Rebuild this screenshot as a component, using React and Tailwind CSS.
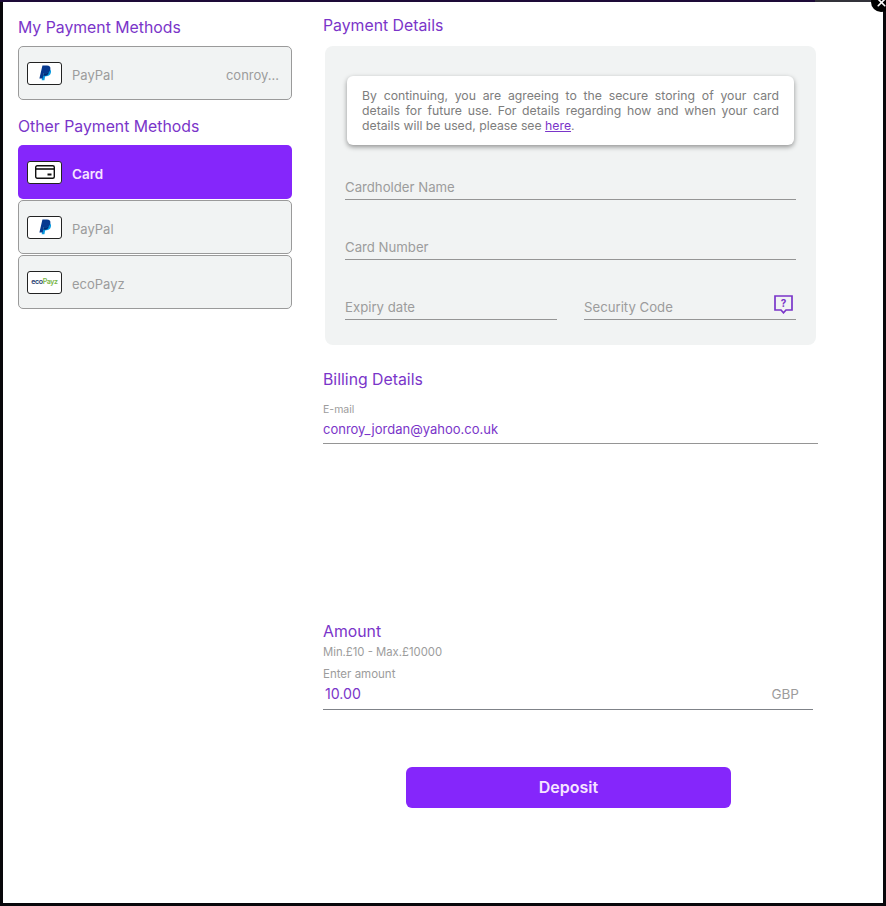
import { X } from 'lucide-react'

function PayPalIcon() {
  return (
    <svg width="14" height="16" viewBox="0 0 24 28">
      <path fill="#0a9be0" d="M20.500 7.500c1.700 1.200 2.400 3.200 1.900 5.800-.9 4.600-3.900 6.600-8.300 6.600h-1c-.6 0-1 .4-1.100 1l-1 5.600H6.200l.5-3 6-16z" />
      <path fill="#07398f" d="M7.500 1h8c4.200 0 6.600 2.200 5.900 6.300-.9 4.900-4 7.200-8.500 7.200h-2.300c-.6 0-1 .4-1.100 1L8 23.500H2.200L7.500 1z" />
      <path fill="#022a74" d="M9.600 15.500c.1-.6.500-1 1.100-1h2.200c2.600 0 4.700-.8 6.100-2.400-1 4.800-3.900 6.800-8.300 6.800h-1l-.6.100z" />
    </svg>
  )
}

function CardIcon() {
  return (
    <svg width="20" height="14" viewBox="0 0 20 14" fill="none" stroke="#111" strokeWidth="1.400">
      <rect x="0.700" y="0.700" width="18.600" height="12.600" rx="1.500" />
      <path d="M0.700 4h18.600" strokeWidth="1.600" />
      <path d="M12.500 9.500h4" strokeWidth="2" />
    </svg>
  )
}

function HelpIcon() {
  return (
    <svg width="19" height="19" viewBox="0 0 19 19" fill="none">
      <path d="M1 1h17v14h-6l-2.500 2.800L7 15H1z" stroke="#7a35c9" strokeWidth="1.700" />
      <text x="9.500" y="12" textAnchor="middle" fontSize="10" fontWeight="700" fill="#7a35c9" fontFamily="Inter, sans-serif">?</text>
    </svg>
  )
}

function MethodRow({ icon, label, extra, active }) {
  return (
    <div
      className={`flex h-[54px] items-center rounded-[5px] pr-3 ${
        active
          ? 'bg-[#8526fb] pl-[9px] text-[13.500px] font-semibold text-[#f6e4ff]'
          : 'border border-[#9a9a9a] bg-[#f1f3f3] pl-[8px] text-[13px] text-[#9c9c9c]'
      }`}
    >
      <div className="flex h-[23px] w-[35px] shrink-0 items-center justify-center rounded-[3px] border border-[#222] bg-white">
        {icon}
      </div>
      <span className="ml-[10px] mt-[5px]">{label}</span>
      {extra && <span className="ml-auto mt-[5px] text-[#9c9c9c]">{extra}</span>}
    </div>
  )
}

function Field({ label, className = '', children }) {
  return (
    <div className={`flex h-[29px] items-end justify-between border-b border-[#959595] pb-px text-[13.200px] text-[#9c9c9c] ${className}`}>
      <span>{label}</span>
      {children}
    </div>
  )
}

export default function App() {
  const heading = 'pt-[2px] text-[15.800px] leading-[18px] text-[#7a35c9]'

  return (
    <div className="relative flex h-[906px] flex-col overflow-hidden bg-[#08070b] font-['Inter',sans-serif]">
      <div className="h-[2px] bg-[linear-gradient(90deg,#1d0a38_92%,#33323a_92%)]" />
      <div className="mx-[3px] flex h-[901px] gap-[31px] bg-white pl-[15px]">
        {/* left column */}
        <div className="w-[274px] pt-[15px]">
          <h2 className={heading}>My Payment Methods</h2>
          <div className="mt-[9px]">
            <MethodRow icon={<PayPalIcon />} label="PayPal" extra="conroy..." />
          </div>
          <h2 className={`${heading} mt-4`}>Other Payment Methods</h2>
          <div className="mt-[9px] flex flex-col gap-px">
            <MethodRow active icon={<CardIcon />} label="Card" />
            <MethodRow icon={<PayPalIcon />} label="PayPal" />
            <MethodRow
              icon={
                <span className="text-[7px] font-semibold tracking-tighter">
                  <span className="text-[#1d3b6e]">eco</span>
                  <span className="text-[#7ab648]">Payz</span>
                </span>
              }
              label="ecoPayz"
            />
          </div>
        </div>

        {/* right column */}
        <div className="w-[495px] pt-[13px]">
          <h2 className={heading}>Payment Details</h2>
          <div className="ml-[2px] mt-[11px] h-[299px] w-[491px] rounded-lg bg-[#f1f3f3] px-5 pt-[30px]">
            <div className="mx-[2px] rounded-md bg-white px-[15px] py-3 text-justify text-[12.250px] leading-[15px] text-[#7d7d7d] shadow-[0_2px_5px_rgba(0,0,0,0.4)]">
              By continuing, you are agreeing to the secure storing of your card details for future use. For details regarding how and when your card details will be used, please see{' '}
              <a className="text-[#7a35c9] underline">here</a>.
            </div>
            <Field label="Cardholder Name" className="mt-[26px]" />
            <Field label="Card Number" className="mt-[31px]" />
            <div className="mt-[31px] flex gap-[27px]">
              <Field label="Expiry date" className="w-[212px]" />
              <Field label="Security Code" className="w-[212px]">
                <span className="mb-[4px] mr-[3px]">
                  <HelpIcon />
                </span>
              </Field>
            </div>
          </div>

          <h2 className={`${heading} mt-6`}>Billing Details</h2>
          <div className="mt-[14px] text-[10.500px] leading-[14px] text-[#9c9c9c]">E-mail</div>
          <div className="mt-[2px] h-[25px] border-b border-[#959595] text-[13px] leading-[20px] text-[#7a35c9]">
            conroy_jordan@yahoo.co.uk
          </div>

          <h2 className={`${heading} mt-[177px]`}>Amount</h2>
          <div className="mt-[4px] text-[11.300px] leading-[14px] text-[#9c9c9c]">Min.£10 - Max.£10000</div>
          <div className="mt-2 text-[11.500px] leading-[14px] text-[#9c9c9c]">Enter amount</div>
          <div className="mt-[3px] flex h-[26px] w-[490px] items-start justify-between border-b border-[#7f8288] pl-[2px] pr-[14px] text-[13.500px] leading-[20px]">
            <span className="text-[14.200px] text-[#7a35c9]">10.00</span>
            <span className="text-[#9c9c9c]">GBP</span>
          </div>

          <button className="ml-[83px] mt-[57px] block h-[41px] w-[325px] rounded-md bg-[#8526fb] pb-px text-base font-semibold text-[#f6e4ff]">
            Deposit
          </button>
        </div>
      </div>
      <div className="absolute -right-[5px] -top-[8px] flex h-[20px] w-[20px] items-center justify-center rounded-full bg-black text-white">
        <X size={13} strokeWidth={3} />
      </div>
    </div>
  )
}
